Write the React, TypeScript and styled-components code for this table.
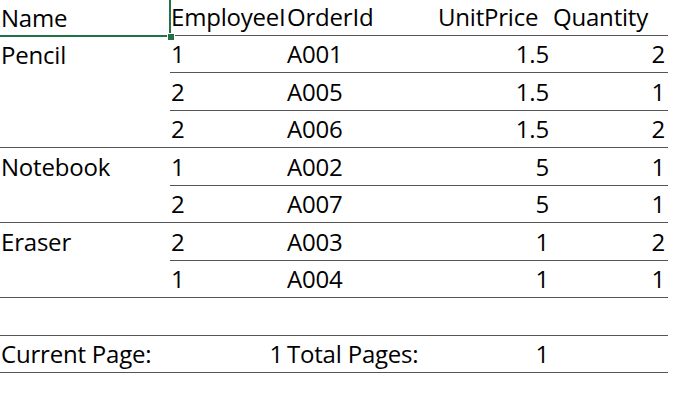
import React from 'react';
import styled, { createGlobalStyle } from 'styled-components';

const GlobalStyle = createGlobalStyle`
  html, body {
    margin: 0;
    padding: 0;
    background: #ffffff;
  }
  body {
    font-family: "Open Sans", "Noto Sans", sans-serif;
    color: #000000;
  }
`;

const LINE = '#555555';
const SELECT = '#217346';

const Sheet = styled.div`
  display: grid;
  grid-template-columns: 170px 116px 151px 115px 116px;
  grid-template-rows: 36px 37px 38px 37px 38px 37px 38px 37px 38px 37px;
  width: 668px;
`;

const Cell = styled.div<{ $align?: 'left' | 'right'; $span?: number }>`
  box-sizing: border-box;
  display: flex;
  align-items: flex-end;
  justify-content: ${(p) => (p.$align === 'right' ? 'flex-end' : 'flex-start')};
  padding: 0 ${(p) => (p.$align === 'right' ? '3px' : '0')} 6px
    ${(p) => (p.$align === 'right' ? '0' : '1px')};
  font-size: 24px;
  line-height: 24px;
  letter-spacing: -0.2px;
  white-space: nowrap;
  overflow: hidden;
  border-bottom: 1px solid ${LINE};
`;

// merged product cell: text sits in the first row of the group
const GroupCell = styled(Cell)<{ $span: number }>`
  grid-row: span ${(p) => p.$span};
  align-items: flex-start;
  padding-top: 7px;
  padding-bottom: 0;
`;

const SelectedCell = styled(Cell)`
  position: relative;
  overflow: visible;
  border-bottom: none;

  &::after {
    content: '';
    position: absolute;
    left: -2px;
    top: -2px;
    right: -1px;
    bottom: -1px;
    border-right: 2px solid ${SELECT};
    border-bottom: 2px solid ${SELECT};
    pointer-events: none;
  }
`;

const FillHandle = styled.span`
  position: absolute;
  right: -4px;
  bottom: -4px;
  width: 6px;
  height: 6px;
  background: ${SELECT};
  box-shadow: 0 0 0 1px #ffffff;
  z-index: 2;
`;

interface Order {
  employee: number;
  orderId: string;
  price: string;
  qty: number;
}

interface Group {
  name: string;
  orders: Order[];
}

const groups: Group[] = [
  {
    name: 'Pencil',
    orders: [
      { employee: 1, orderId: 'A001', price: '1.5', qty: 2 },
      { employee: 2, orderId: 'A005', price: '1.5', qty: 1 },
      { employee: 2, orderId: 'A006', price: '1.5', qty: 2 },
    ],
  },
  {
    name: 'Notebook',
    orders: [
      { employee: 1, orderId: 'A002', price: '5', qty: 1 },
      { employee: 2, orderId: 'A007', price: '5', qty: 1 },
    ],
  },
  {
    name: 'Eraser',
    orders: [
      { employee: 2, orderId: 'A003', price: '1', qty: 2 },
      { employee: 1, orderId: 'A004', price: '1', qty: 1 },
    ],
  },
];

export default function App() {
  return (
    <>
      <GlobalStyle />
      <Sheet>
        <SelectedCell>
          Name
          <FillHandle />
        </SelectedCell>
        <Cell>EmployeeI</Cell>
        <Cell>OrderId</Cell>
        <Cell>UnitPrice</Cell>
        <Cell>Quantity</Cell>

        {groups.map((g) => (
          <React.Fragment key={g.name}>
            <GroupCell $span={g.orders.length}>{g.name}</GroupCell>
            {g.orders.map((o) => (
              <React.Fragment key={o.orderId}>
                <Cell>{o.employee}</Cell>
                <Cell>{o.orderId}</Cell>
                <Cell $align="right">{o.price}</Cell>
                <Cell $align="right">{o.qty}</Cell>
              </React.Fragment>
            ))}
          </React.Fragment>
        ))}

        <Cell />
        <Cell />
        <Cell />
        <Cell />
        <Cell />

        <Cell>Current Page:</Cell>
        <Cell $align="right">1</Cell>
        <Cell>Total Pages:</Cell>
        <Cell $align="right">1</Cell>
        <Cell />
      </Sheet>
    </>
  );
}
